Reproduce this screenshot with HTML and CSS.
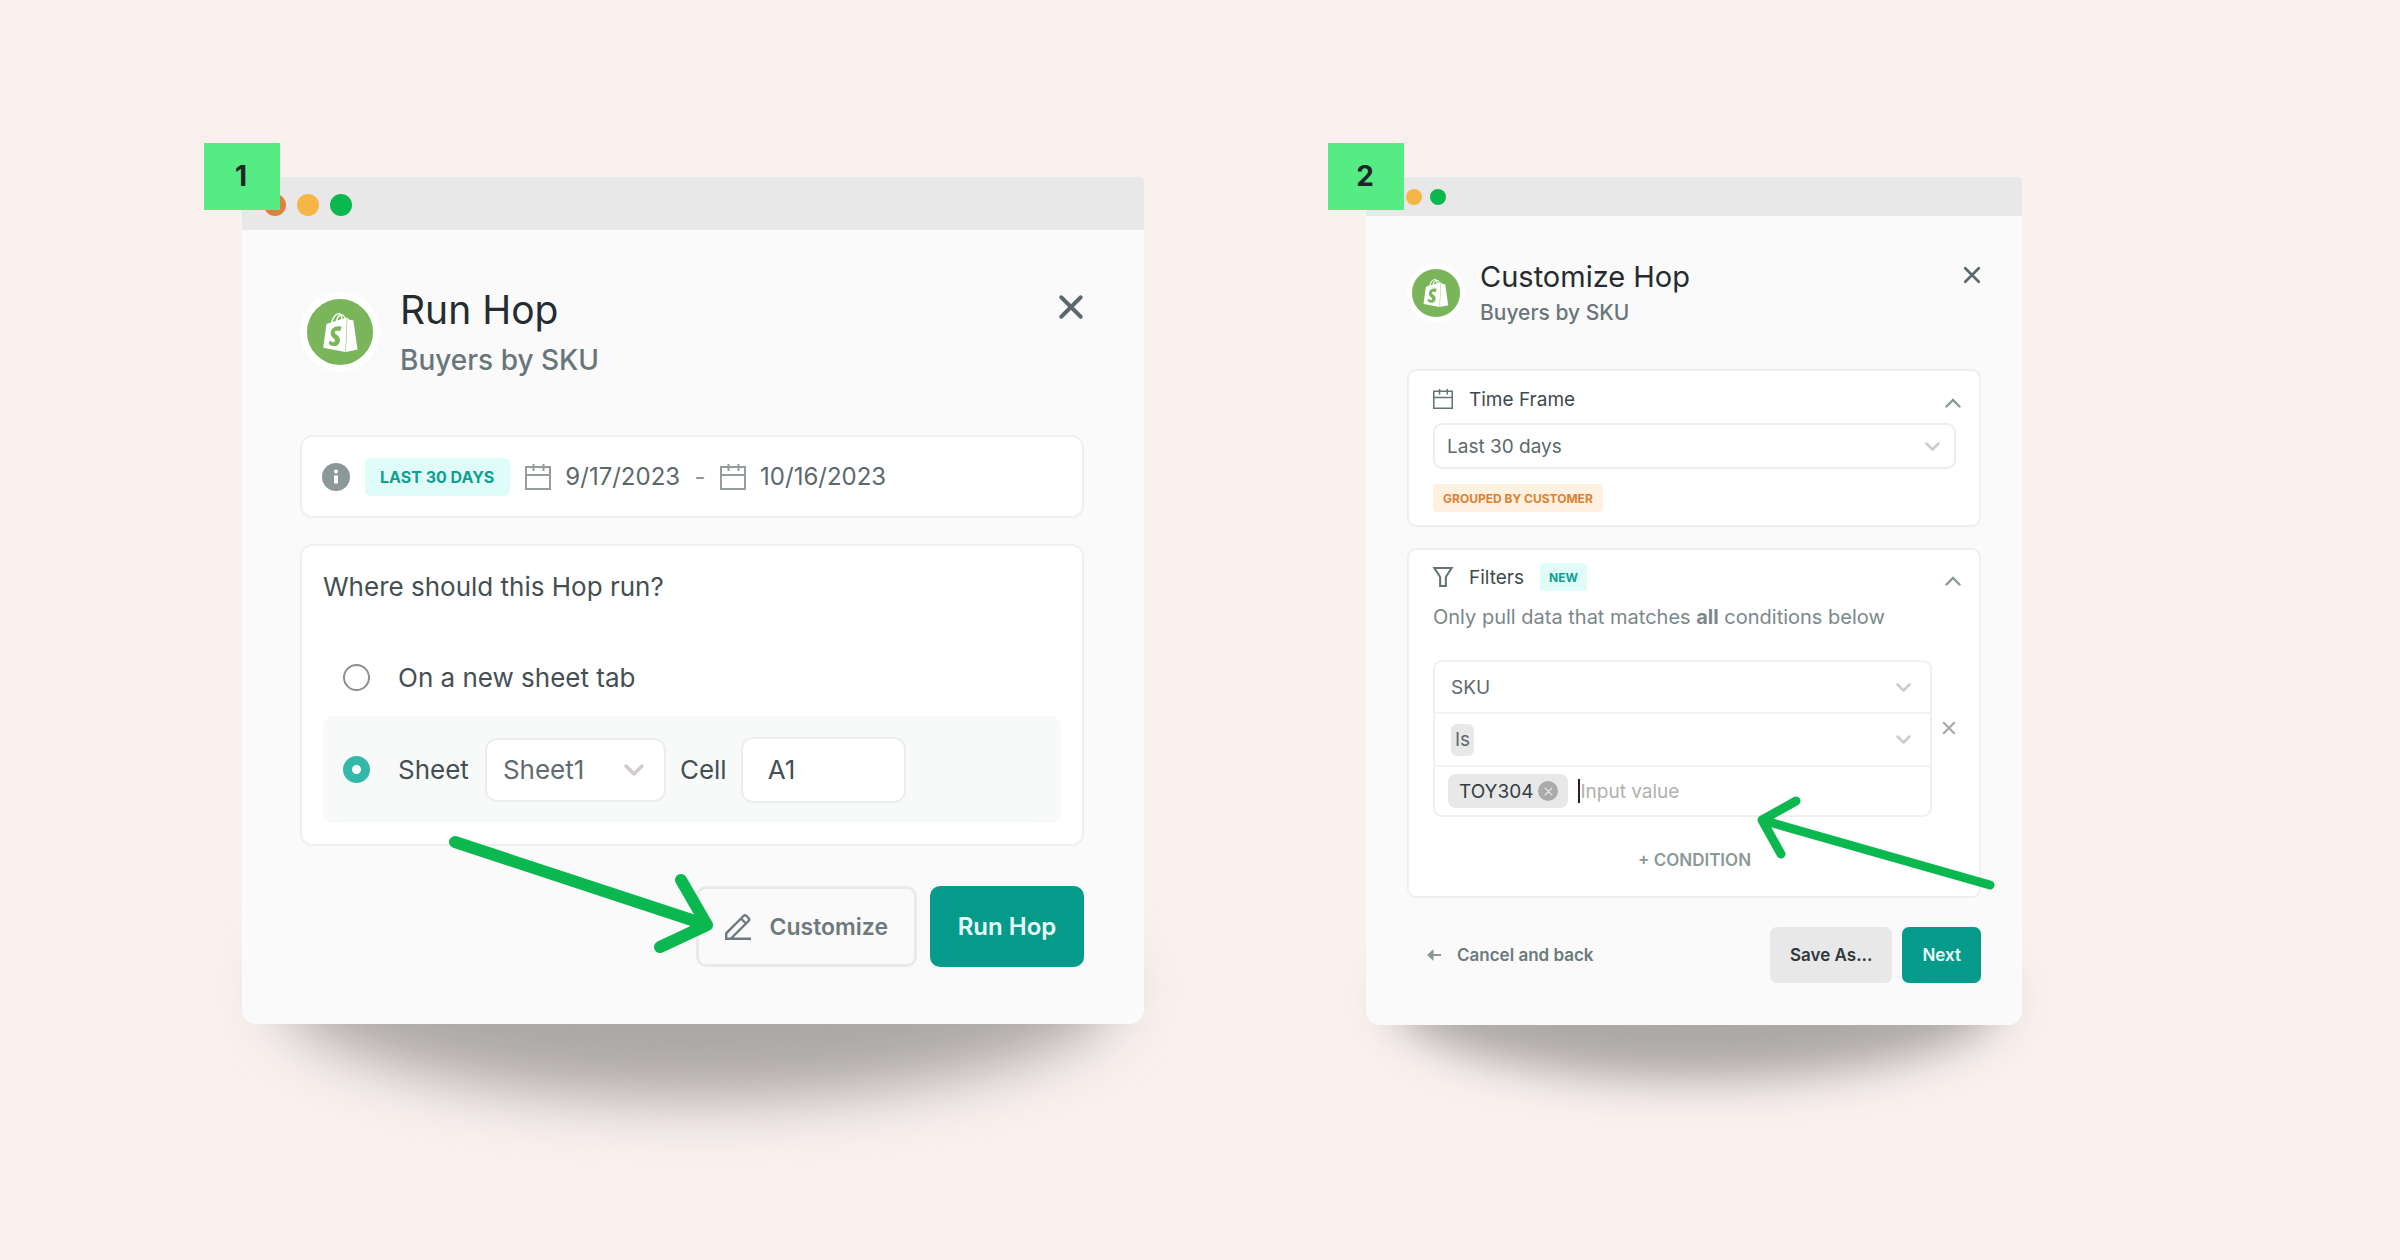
FILE: index.html
```html
<!DOCTYPE html>
<html lang="en">
<head>
<meta charset="utf-8">
<meta name="viewport" content="width=device-width, initial-scale=1">
<title>Run and customize a Hop</title>
<link rel="stylesheet" href="styles.css">
</head>
<body>
<svg class="sprite" aria-hidden="true">
  <symbol id="bag" viewBox="0 0 24 24"><path fill="#fff" d="M15.337 23.979l7.216-1.561s-2.604-17.613-2.625-17.73c-.018-.116-.114-.192-.211-.192s-1.929-.136-1.929-.136-1.275-1.274-1.439-1.411c-.045-.037-.075-.057-.121-.074l-.914 21.104h.023zM11.71 11.305s-.81-.424-1.774-.424c-1.447 0-1.504.906-1.504 1.141 0 1.232 3.24 1.715 3.24 4.629 0 2.295-1.44 3.76-3.406 3.76-2.354 0-3.54-1.465-3.54-1.465l.646-2.086s1.245 1.066 2.28 1.066c.675 0 .975-.545.975-.932 0-1.619-2.654-1.694-2.654-4.359-.034-2.237 1.571-4.416 4.827-4.416 1.257 0 1.875.361 1.875.361l-.945 2.715-.02.01zM11.17.83c.136 0 .271.038.405.135-.984.465-2.064 1.639-2.508 3.992-.656.213-1.293.405-1.889.578C7.697 3.75 8.951.84 11.17.84V.83zm1.235 2.949v.135c-.754.232-1.583.484-2.394.736.466-1.777 1.333-2.645 2.085-2.971.193.501.309 1.176.309 2.1zm.539-2.234c.694.074 1.141.867 1.429 1.755-.349.114-.735.231-1.158.366v-.252c0-.752-.096-1.371-.271-1.871v.002zm2.992 1.289c-.02 0-.06.021-.078.021s-.289.075-.714.21c-.423-1.233-1.176-2.37-2.508-2.37h-.115C12.135.209 11.669 0 11.265 0 8.159 0 6.675 3.877 6.21 5.846c-1.194.365-2.063.636-2.16.674-.675.213-.694.232-.772.87-.075.462-1.83 14.063-1.83 14.063L15.009 24l.927-21.166z"/></symbol>
  <symbol id="cross" viewBox="0 0 24 24"><path d="M3 3l18 18M21 3L3 21" fill="none" stroke="currentColor" stroke-width="3.6" stroke-linecap="round"/></symbol>
  <symbol id="calendar" viewBox="0 0 26 26"><path d="M1 3h24v22H1zM1 11h24M8.500 0v7M18.500 0v7" fill="none" stroke="currentColor" stroke-width="2"/></symbol>
  <symbol id="down" viewBox="0 0 20 12"><path d="M2 2l8 8 8-8" fill="none" stroke="currentColor" stroke-width="3.400" stroke-linecap="round" stroke-linejoin="round"/></symbol>
  <symbol id="up" viewBox="0 0 16 10"><path d="M1.500 8.500L8 2l6.500 6.500" fill="none" stroke="currentColor" stroke-width="2.400" stroke-linecap="round"/></symbol>
</svg>

<main class="stage">
  <section class="frame frame-run" aria-labelledby="run-title">
    <div class="shadow"></div>
    <div class="window">
      <div class="titlebar"><span class="dot dot-red"></span><span class="dot dot-amber"></span><span class="dot dot-green"></span></div>
      <form class="body">
        <header class="head">
          <span class="avatar"><svg class="bag"><use href="#bag"/></svg></span>
          <div class="titles"><h1 class="title" id="run-title">Run Hop</h1><p class="subtitle">Buyers by SKU</p></div>
          <button type="button" class="close" aria-label="Close"><svg><use href="#cross"/></svg></button>
        </header>
        <div class="card dates">
          <svg class="info" viewBox="0 0 28 28"><circle cx="14" cy="14" r="14" fill="#8c9898"/><circle cx="14" cy="8.500" r="2" fill="#fff"/><path d="M14 12.500v8" stroke="#fff" stroke-width="4"/></svg>
          <span class="tag tag-teal">LAST 30 DAYS</span>
          <svg class="calendar"><use href="#calendar"/></svg>
          <time class="date">9/17/2023</time>
          <span class="dash">-</span>
          <svg class="calendar"><use href="#calendar"/></svg>
          <time class="date">10/16/2023</time>
        </div>
        <fieldset class="card where">
          <div class="question" id="where">Where should this Hop run?</div>
          <div class="option">
            <input class="radio" type="radio" name="target" id="target-new">
            <label for="target-new">On a new sheet tab</label>
          </div>
          <div class="option option-picked">
            <input class="radio" type="radio" name="target" id="target-sheet" aria-label="Existing sheet" checked>
            <label for="sheet">Sheet</label>
            <span class="picker sheet-picker"><select id="sheet"><option>Sheet1</option></select><svg class="down"><use href="#down"/></svg></span>
            <label for="cell">Cell</label>
            <input class="cell" id="cell" type="text" value="A1">
          </div>
        </fieldset>
        <footer class="actions">
          <button type="button" class="btn btn-line"><svg class="pencil" viewBox="0 0 26 26"><path d="M1.200 24.800v-5.500L18.500 2q1.500-1.500 3 0l2 2q1.500 1.500 0 3L6 24.500M0 24.800h26M16 4.500l5 5" fill="none" stroke="currentColor" stroke-width="2.400"/></svg>Customize</button>
          <button type="button" class="btn btn-solid">Run Hop</button>
        </footer>
      </form>
    </div>
    <svg class="arrow" viewBox="0 0 270 86"><path d="M6 12L258 95M232 50l26 45-47 22" fill="none" stroke="#0ab84f" stroke-width="12" stroke-linecap="round" stroke-linejoin="round"/></svg>
    <span class="step">1</span>
  </section>

  <section class="frame frame-custom" aria-labelledby="custom-title">
    <div class="shadow"></div>
    <div class="window">
      <div class="titlebar"><span class="dot dot-red"></span><span class="dot dot-amber"></span><span class="dot dot-green"></span></div>
      <form class="body">
        <header class="head">
          <span class="avatar"><svg class="bag"><use href="#bag"/></svg></span>
          <div class="titles"><h2 class="title" id="custom-title">Customize Hop</h2><p class="subtitle">Buyers by SKU</p></div>
          <button type="button" class="close" aria-label="Close"><svg><use href="#cross"/></svg></button>
        </header>
        <section class="card timeframe">
          <div class="card-head">
            <svg class="head-icon"><use href="#calendar"/></svg>
            <label class="card-title" for="range">Time Frame</label>
            <button type="button" class="fold" aria-label="Collapse time frame"><svg><use href="#up"/></svg></button>
          </div>
          <span class="picker range-picker"><select id="range"><option>Last 30 days</option></select><svg class="down"><use href="#down"/></svg></span>
          <span class="tag tag-orange">GROUPED BY CUSTOMER</span>
        </section>
        <section class="card filters">
          <div class="card-head">
            <svg class="head-icon" viewBox="0 0 20 21"><path d="M1 1h18l-6 9.500V20H7v-9.500z" fill="none" stroke="currentColor" stroke-width="2.200"/></svg>
            <h3 class="card-title">Filters</h3>
            <span class="tag tag-teal">NEW</span>
            <button type="button" class="fold" aria-label="Collapse filters"><svg><use href="#up"/></svg></button>
          </div>
          <p class="hint">Only pull data that matches <b>all</b> conditions below</p>
          <div class="condition">
            <div class="rules">
              <div class="rule"><select class="field" aria-label="Field"><option>SKU</option></select><svg class="down"><use href="#down"/></svg></div>
              <div class="rule"><select class="operator" aria-label="Operator"><option>Is</option></select><svg class="down"><use href="#down"/></svg></div>
              <div class="rule rule-value">
                <span class="chip">TOY304<button type="button" class="chip-x" aria-label="Remove TOY304"><svg><use href="#cross"/></svg></button></span>
                <span class="caret"></span><input class="value" type="text" placeholder="Input value" aria-label="Value">
              </div>
            </div>
            <button type="button" class="drop" aria-label="Remove condition"><svg><use href="#cross"/></svg></button>
          </div>
          <button type="button" class="add">+ CONDITION</button>
        </section>
        <footer class="actions">
          <a class="back" href="#"><svg class="left" viewBox="0 0 14 12"><path d="M6 6h8" stroke="currentColor" stroke-width="2"/><path d="M0 6l6.500-6v12z" fill="currentColor"/></svg>Cancel and back</a>
          <button type="button" class="btn btn-grey">Save As...</button>
          <button type="button" class="btn btn-solid">Next</button>
        </footer>
      </form>
    </div>
    <svg class="arrow" viewBox="0 0 240 96"><path d="M234 90L6 25M40 6L6 25l19 34" fill="none" stroke="#0ab84f" stroke-width="9" stroke-linecap="round" stroke-linejoin="round"/></svg>
    <span class="step">2</span>
  </section>
</main>
</body>
</html>
```

FILE: styles.css
```css
* { box-sizing: border-box; }
body {
  margin: 0;
  min-height: 100vh;
  background: #faf1ef;
  color: #454f53;
  font-family: Inter, "Liberation Sans", sans-serif;
}
h1, h2, h3, p { margin: 0; font-weight: 400; }
button, input, select { font: inherit; color: inherit; letter-spacing: inherit; }
button { padding: 0; border: 0; background: none; cursor: pointer; }
svg { display: block; flex: none; overflow: visible; }
.sprite { position: absolute; width: 0; height: 0; }

.stage {
  display: grid;
  grid-template-columns: 902fr 656fr;
  align-items: start;
  gap: 222px;
  padding: 177px 378px 177px 242px;
}
.frame { position: relative; }
.window {
  position: relative;
  overflow: hidden;
  border-radius: 0 4px 14px 14px;
  background: #fafafa;
}
.shadow {
  position: absolute;
  left: 4%;
  right: 3%;
  border-radius: 50%;
  background: #aca8a7;
}
.frame-run .shadow { bottom: -76px; height: 220px; filter: blur(30px); }
.frame-custom .shadow { bottom: -55px; height: 160px; filter: blur(22px); }

.step {
  position: absolute;
  left: -38px;
  top: -34px;
  display: grid;
  place-items: center;
  width: 76px;
  height: 67px;
  padding: 0 2px 2px 0;
  background: #55ed83;
  color: #212529;
  font-size: 28px;
  font-weight: 700;
}
.arrow { position: absolute; pointer-events: none; }
.frame-run .arrow { left: 207px; top: 653px; width: 270px; height: 86px; }
.frame-custom .arrow { right: 26px; top: 618px; width: 240px; height: 96px; }

.titlebar { display: flex; align-items: center; background: #e8e8e8; }
.dot { border-radius: 50%; }
.dot-red { background: #dd8140; }
.dot-amber { background: #f6b645; }
.dot-green { background: #0ab84f; }
.frame-run .titlebar { height: 53px; padding: 2px 22px 0; gap: 11px; }
.frame-run .dot { width: 22px; height: 22px; }
.frame-custom .titlebar { height: 39px; padding: 1px 16px 0; gap: 8px; }
.frame-custom .dot { width: 16px; height: 16px; }

.head { display: flex; align-items: flex-start; }
.titles { flex: 1; }
.title { color: #252c31; }
.subtitle { color: #68767a; font-weight: 500; }
.avatar { display: grid; place-items: center; border-radius: 50%; border: solid #fff; background: #7ab55c; }
.close { color: #5b686c; }
.close svg { width: 100%; height: 100%; }
.card { margin: 0; border: 2px solid #eef0f0; background: #fff; }
.tag { display: inline-flex; align-items: center; font-weight: 700; }
.tag-teal { background: #e0fcf8; color: #109f90; }
.tag-orange { background: #fff1e0; color: #dd8030; }
.picker { position: relative; display: block; }
.picker select {
  width: 100%;
  height: 100%;
  border: 2px solid #eceeee;
  background: #fff;
  appearance: none;
}
.down { color: #d0cbcb; }
.picker .down { position: absolute; top: 50%; pointer-events: none; }
.actions { display: flex; align-items: center; }
.btn { font-weight: 600; }
.btn-line { display: flex; align-items: center; border: 3px solid #e9ebeb; color: #6c7a7d; }
.btn-solid { background: #049b8b; color: #eafffb; }
.btn-grey { background: #e8e8e8; color: #2f383c; }

/* Run Hop */
.frame-run .body { padding: 55px 60px 57px 58px; }
.frame-run .title { font-size: 39px; line-height: 50px; }
.frame-run .subtitle { font-size: 28px; line-height: 50px; }
.frame-run .avatar { width: 80px; height: 80px; margin: 7px 20px 0 0; border-width: 7px; }
.frame-run .bag { width: 39px; height: 39px; }
.frame-run .close { width: 26px; height: 26px; margin-top: 9px; }
.frame-run .card { border-radius: 12px; }
.dates { display: flex; align-items: center; height: 83px; margin-top: 50px; padding: 0 20px; }
.info { width: 28px; height: 28px; margin-right: 15px; }
.dates .tag { height: 38px; margin-right: 15px; padding: 0 16px 0 15px; border-radius: 5px; font-size: 16px; }
.calendar { width: 26px; height: 26px; margin-right: 14px; color: #949c9c; }
.date { color: #5b686c; font-size: 24px; }
.dash { width: 40px; text-align: center; color: #8c9898; font-size: 24px; }
.where { min-width: 0; margin-top: 26px; padding: 21px 21px 21px; font-size: 26px; }
.question { margin-bottom: 31px; line-height: 40px; }
.option { display: flex; align-items: center; height: 78px; padding: 0 20px; }
.option-picked { height: 107px; border-radius: 10px; background: #f8fafa; }
.radio {
  flex: none;
  width: 27px;
  height: 27px;
  margin: 0 28px 0 0;
  border: 2px solid #8f8f8f;
  border-radius: 50%;
  background: #fff;
  appearance: none;
}
.radio:checked { border: 9px solid #33b8aa; }
.sheet-picker { width: 181px; height: 64px; margin: 0 14px 0 16px; }
.sheet-picker select { padding: 0 16px; border-radius: 12px; color: #5f6b6f; }
.sheet-picker .down { right: 22px; width: 20px; height: 12px; margin-top: -6px; }
.cell { width: 165px; height: 66px; margin-left: 14px; padding: 0 25px; border: 2px solid #eceeee; border-radius: 12px; background: #fff; }
.frame-run .actions { justify-content: flex-end; gap: 13px; margin-top: 40px; }
.frame-run .btn { height: 81px; border-radius: 10px; font-size: 24px; }
.frame-run .btn-line { padding: 0 26px; gap: 19px; font-size: 23px; }
.pencil { width: 26px; height: 26px; }
.frame-run .btn-solid { width: 154px; }

/* Customize Hop */
.frame-custom .body { padding: 43px 41px 42px; font-size: 19px; }
.frame-custom .title { font-size: 29px; line-height: 36px; }
.frame-custom .subtitle { font-size: 21px; line-height: 36px; }
.frame-custom .avatar { width: 58px; height: 58px; margin: 5px 15px 0 0; border-width: 5px; }
.frame-custom .bag { width: 28px; height: 28px; }
.frame-custom .close { width: 18px; height: 18px; margin-top: 7px; }
.frame-custom .card { border-radius: 9px; }
.frame-custom .tag { height: 28px; border-radius: 4px; font-size: 12px; }
.card-head { display: flex; align-items: center; }
.card-title { font-size: 19px; color: #3f494d; }
.head-icon { width: 20px; height: 20px; margin-right: 16px; color: #657377; }
.fold { margin: 7px -5px 0 auto; color: #8c9898; }
.fold svg { width: 16px; height: 10px; }
.timeframe { margin-top: 38px; padding: 10px 23px 13px 24px; }
.timeframe .card-head { height: 36px; }
.range-picker { height: 46px; margin: 6px 0 15px; }
.range-picker select { padding: 0 12px; border-radius: 9px; color: #5b686c; }
.range-picker .down { right: 16px; width: 15px; height: 9px; margin-top: -4px; }
.tag-orange { display: flex; width: fit-content; padding: 0 10px; }
.filters { margin-top: 21px; padding: 13px 23px 16px 24px; }
.filters .card-head { height: 28px; }
.filters .tag { margin-left: 16px; padding: 0 9px; }
.hint { margin-top: 12px; color: #7b878a; font-size: 20px; line-height: 28px; }
.condition { display: flex; align-items: flex-start; gap: 10px; margin: 29px 0 23px; }
.rules { flex: 1; border: 2px solid #eff0f0; border-radius: 9px; }
.rule { display: flex; align-items: center; justify-content: space-between; height: 50px; padding: 0 19px 0 16px; }
.rule + .rule { height: 53px; border-top: 2px solid #f2f3f3; }
.rules .rule-value { height: 50px; padding-left: 13px; }
.rule select { border: 0; padding: 0; background: none; color: #5b686c; appearance: none; }
.rule .down { width: 15px; height: 9px; pointer-events: none; }
.rule .field { flex: 1; }
.rule .operator { height: 32px; padding: 0 4px; border-radius: 6px; background: #e8e8e8; field-sizing: content; }
.chip { display: flex; align-items: center; gap: 5px; height: 34px; padding: 0 10px 0 11px; border-radius: 8px; background: #e8e8e8; color: #343d41; }
.chip-x { display: grid; place-items: center; width: 20px; height: 20px; border-radius: 50%; background: #aaa; color: #e8e8e8; }
.chip-x svg { width: 9px; height: 9px; }
.caret { width: 2px; height: 24px; margin-left: 10px; background: #222; }
.value { flex: 1; min-width: 0; padding: 0; border: 0; background: none; outline: 0; }
.value::placeholder { color: #b3b0ad; opacity: 1; }
.drop { width: 14px; height: 14px; margin-top: 61px; color: #aaa6a6; }
.drop svg { width: 14px; height: 14px; }
.add { display: block; height: 40px; margin: 0 auto; color: #8b9997; font-size: 17px; font-weight: 600; }
.frame-custom .actions { margin-top: 29px; gap: 10px; font-size: 17px; }
.back { display: flex; align-items: center; gap: 16px; margin: 0 auto 0 20px; color: #6c7a7d; font-weight: 600; text-decoration: none; }
.left { width: 14px; height: 12px; color: #8c9898; }
.frame-custom .btn { height: 56px; padding: 0 20px; border-radius: 7px; }
```
